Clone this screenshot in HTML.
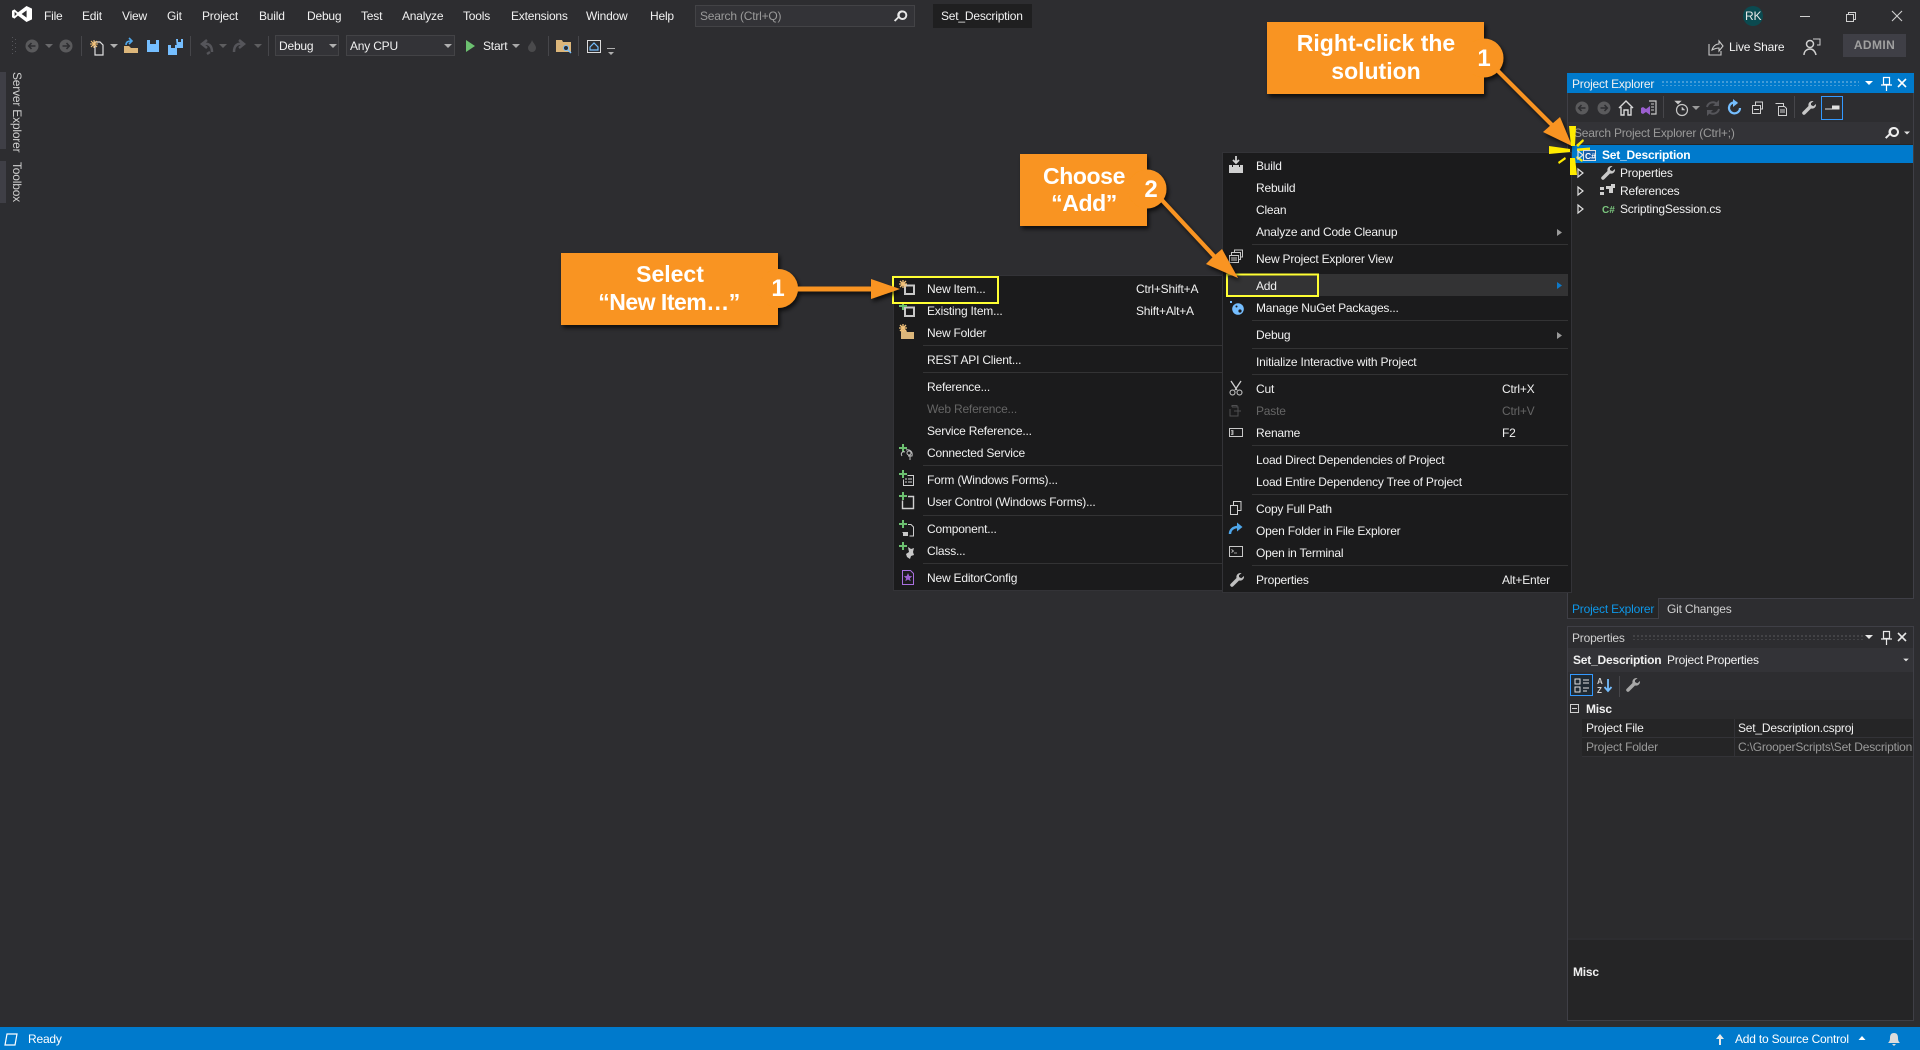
<!DOCTYPE html>
<html><head><meta charset="utf-8"><title>Set_Description</title>
<style>
html,body{margin:0;padding:0;width:1920px;height:1050px;overflow:hidden;background:#2d2d30}
body{position:relative;font:12px/16px "Liberation Sans",sans-serif;color:#f1f1f1}
.t{position:absolute;white-space:nowrap;font-size:12px;line-height:16px;letter-spacing:-.2px}
.b{position:absolute;box-sizing:border-box}
.d{color:#656565}
.g{color:#9a9a9a}
.s{position:absolute;height:1px;background:#333334}
svg{position:absolute;left:0;top:0}
</style></head><body>
<!-- menu bar -->
<div class="t" style="left:44px;top:8px">File</div>
<div class="t" style="left:82px;top:8px">Edit</div>
<div class="t" style="left:122px;top:8px">View</div>
<div class="t" style="left:167px;top:8px">Git</div>
<div class="t" style="left:202px;top:8px">Project</div>
<div class="t" style="left:259px;top:8px">Build</div>
<div class="t" style="left:307px;top:8px">Debug</div>
<div class="t" style="left:361px;top:8px">Test</div>
<div class="t" style="left:402px;top:8px">Analyze</div>
<div class="t" style="left:463px;top:8px">Tools</div>
<div class="t" style="left:511px;top:8px">Extensions</div>
<div class="t" style="left:586px;top:8px">Window</div>
<div class="t" style="left:650px;top:8px">Help</div>
<div class="b" style="left:695px;top:5px;width:220px;height:22px;background:#333337;border:1px solid #434346"></div>
<div class="t g" style="left:700px;top:8px">Search (Ctrl+Q)</div>
<div class="b" style="left:933px;top:4px;width:99px;height:24px;background:#1f1f20"></div>
<div class="t" style="left:941px;top:8px">Set_Description</div>
<div class="t" style="left:1745px;top:8px;z-index:3;color:#e8e8e8">RK</div>
<!-- toolbar combos -->
<div class="b" style="left:275px;top:35px;width:64px;height:21px;background:#333337;border:1px solid #434346"></div>
<div class="t" style="left:279px;top:38px">Debug</div>
<div class="b" style="left:346px;top:35px;width:109px;height:21px;background:#333337;border:1px solid #434346"></div>
<div class="t" style="left:350px;top:38px">Any CPU</div>
<div class="t" style="left:483px;top:38px">Start</div>
<div class="t" style="left:1729px;top:39px">Live Share</div>
<div class="b" style="left:1843px;top:34px;width:63px;height:23px;background:#3f3f46;color:#a0a0a0;font:bold 12px/23px 'Liberation Sans',sans-serif;text-align:center;letter-spacing:.4px">ADMIN</div>
<!-- vertical tabs -->
<div class="b" style="left:0;top:72px;width:6px;height:77px;background:#3f3f46"></div>
<div class="b" style="left:0;top:161px;width:6px;height:42px;background:#3f3f46"></div>
<div class="t" style="left:9px;top:72px;writing-mode:vertical-rl;color:#d0d0d0">Server Explorer</div>
<div class="t" style="left:9px;top:162px;writing-mode:vertical-rl;color:#d0d0d0">Toolbox</div>
<!-- Project Explorer panel -->
<div class="b" style="left:1567px;top:73px;width:347px;height:526px;background:#252526;border:1px solid #3f3f46"></div>
<div class="b" style="left:1567px;top:73px;width:347px;height:20px;background:#007acc"></div>
<div class="t" style="left:1572px;top:76px">Project Explorer</div>
<div class="b" style="left:1661px;top:80px;width:198px;height:6px;background-image:radial-gradient(#59a8dc 0.8px,transparent 1px);background-size:4px 4px"></div>
<div class="b" style="left:1568px;top:93px;width:345px;height:29px;background:#2d2d30"></div>
<div class="b" style="left:1568px;top:122px;width:345px;height:22px;background:#333337"></div>
<div class="b" style="left:1900px;top:122px;width:13px;height:22px;background:#2d2d30"></div>
<div class="t g" style="left:1574px;top:125px">Search Project Explorer (Ctrl+;)</div>
<div class="b" style="left:1572px;top:145px;width:341px;height:18px;background:#007acc"></div>
<div class="t" style="left:1602px;top:147px;font-weight:bold;color:#fff">Set_Description</div>
<div class="t" style="left:1620px;top:165px">Properties</div>
<div class="t" style="left:1620px;top:183px">References</div>
<div class="t" style="left:1620px;top:201px">ScriptingSession.cs</div>
<!-- panel tabs -->
<div class="b" style="left:1567px;top:598px;width:92px;height:21px;background:#252526;border:1px solid #3f3f46;border-top:0"></div>
<div class="t" style="left:1572px;top:601px;color:#0e97e8">Project Explorer</div>
<div class="t" style="left:1667px;top:601px;color:#d0d0d0">Git Changes</div>
<!-- Properties panel -->
<div class="b" style="left:1567px;top:626px;width:347px;height:395px;background:#252526;border:1px solid #3f3f46"></div>
<div class="b" style="left:1568px;top:627px;width:345px;height:21px;background:#2d2d30"></div>
<div class="t" style="left:1572px;top:630px;color:#d0d0d0">Properties</div>
<div class="b" style="left:1632px;top:634px;width:232px;height:6px;background-image:radial-gradient(#4a4a4e 0.8px,transparent 1px);background-size:4px 4px"></div>
<div class="b" style="left:1568px;top:648px;width:345px;height:24px;background:#333337"></div>
<div class="t" style="left:1573px;top:652px;font-weight:bold">Set_Description</div>
<div class="t" style="left:1667px;top:652px">Project Properties</div>
<div class="b" style="left:1568px;top:672px;width:345px;height:28px;background:#2d2d30"></div>
<div class="b" style="left:1570px;top:674px;width:23px;height:22px;background:#1f2a33;border:1px solid #3399ff"></div>
<div class="b" style="left:1568px;top:700px;width:345px;height:238px;background:#2b2b2d"></div>
<div class="t" style="left:1586px;top:701px;font-weight:bold">Misc</div>
<div class="b" style="left:1582px;top:719px;width:331px;height:19px;background:#252526;border-bottom:1px solid #333337"></div>
<div class="b" style="left:1582px;top:738px;width:331px;height:19px;background:#252526;border-bottom:1px solid #333337"></div>
<div class="b" style="left:1734px;top:719px;width:1px;height:38px;background:#333337"></div>
<div class="t" style="left:1586px;top:720px">Project File</div>
<div class="t g" style="left:1586px;top:739px">Project Folder</div>
<div class="t" style="left:1738px;top:720px">Set_Description.csproj</div>
<div class="t g" style="left:1738px;top:739px;width:175px;overflow:hidden">C:\GrooperScripts\Set Description</div>
<div class="b" style="left:1568px;top:938px;width:345px;height:2px;background:#2d2d30"></div>
<div class="t" style="left:1573px;top:964px;font-weight:bold">Misc</div>
<!-- left submenu -->
<div class="b" style="left:893px;top:275px;width:340px;height:316px;background:#1b1b1c;border:1px solid #333337"></div>
<div class="s" style="left:923px;top:345px;width:300px"></div>
<div class="s" style="left:923px;top:372px;width:300px"></div>
<div class="s" style="left:923px;top:465px;width:300px"></div>
<div class="s" style="left:923px;top:515px;width:300px"></div>
<div class="s" style="left:923px;top:563px;width:300px"></div>
<div class="t" style="left:927px;top:281px">New Item...</div>
<div class="t" style="left:1136px;top:281px">Ctrl+Shift+A</div>
<div class="t" style="left:927px;top:303px">Existing Item...</div>
<div class="t" style="left:1136px;top:303px">Shift+Alt+A</div>
<div class="t" style="left:927px;top:325px">New Folder</div>
<div class="t" style="left:927px;top:352px">REST API Client...</div>
<div class="t" style="left:927px;top:379px">Reference...</div>
<div class="t d" style="left:927px;top:401px">Web Reference...</div>
<div class="t" style="left:927px;top:423px">Service Reference...</div>
<div class="t" style="left:927px;top:445px">Connected Service</div>
<div class="t" style="left:927px;top:472px">Form (Windows Forms)...</div>
<div class="t" style="left:927px;top:494px">User Control (Windows Forms)...</div>
<div class="t" style="left:927px;top:521px">Component...</div>
<div class="t" style="left:927px;top:543px">Class...</div>
<div class="t" style="left:927px;top:570px">New EditorConfig</div>
<!-- right context menu -->
<div class="b" style="left:1222px;top:152px;width:350px;height:441px;background:#1b1b1c;border:1px solid #333337"></div>
<div class="b" style="left:1226px;top:274px;width:342px;height:22px;background:#333334"></div>
<div class="s" style="left:1252px;top:244px;width:316px"></div>
<div class="s" style="left:1252px;top:320px;width:316px"></div>
<div class="s" style="left:1252px;top:348px;width:316px"></div>
<div class="s" style="left:1252px;top:374px;width:316px"></div>
<div class="s" style="left:1252px;top:445px;width:316px"></div>
<div class="s" style="left:1252px;top:494px;width:316px"></div>
<div class="s" style="left:1252px;top:565px;width:316px"></div>
<div class="t" style="left:1256px;top:158px">Build</div>
<div class="t" style="left:1256px;top:180px">Rebuild</div>
<div class="t" style="left:1256px;top:202px">Clean</div>
<div class="t" style="left:1256px;top:224px">Analyze and Code Cleanup</div>
<div class="t" style="left:1256px;top:251px">New Project Explorer View</div>
<div class="t" style="left:1256px;top:278px">Add</div>
<div class="t" style="left:1256px;top:300px">Manage NuGet Packages...</div>
<div class="t" style="left:1256px;top:327px">Debug</div>
<div class="t" style="left:1256px;top:354px">Initialize Interactive with Project</div>
<div class="t" style="left:1256px;top:381px">Cut</div>
<div class="t" style="left:1502px;top:381px">Ctrl+X</div>
<div class="t d" style="left:1256px;top:403px">Paste</div>
<div class="t d" style="left:1502px;top:403px">Ctrl+V</div>
<div class="t" style="left:1256px;top:425px">Rename</div>
<div class="t" style="left:1502px;top:425px">F2</div>
<div class="t" style="left:1256px;top:452px">Load Direct Dependencies of Project</div>
<div class="t" style="left:1256px;top:474px">Load Entire Dependency Tree of Project</div>
<div class="t" style="left:1256px;top:501px">Copy Full Path</div>
<div class="t" style="left:1256px;top:523px">Open Folder in File Explorer</div>
<div class="t" style="left:1256px;top:545px">Open in Terminal</div>
<div class="t" style="left:1256px;top:572px">Properties</div>
<div class="t" style="left:1502px;top:572px">Alt+Enter</div>
<!-- status bar -->
<div class="b" style="left:0;top:1027px;width:1920px;height:23px;background:#007acc"></div>
<div class="t" style="left:28px;top:1031px;color:#fff">Ready</div>
<div class="t" style="left:1735px;top:1031px;color:#fff">Add to Source Control</div>

<svg width="1920" height="1050" viewBox="0 0 1920 1050" style="z-index:2">
<defs>
<filter id="sh" x="-20%" y="-20%" width="150%" height="150%"><feDropShadow dx="2" dy="3" stdDeviation="2" flood-color="#000" flood-opacity=".7"/></filter>
<path id="wr" d="M11.5 1a4 4 0 0 0-4 5L1.500 12a1.800 1.800 0 0 0 2.500 2.500l6-6a4 4 0 0 0 5-4.500l-2.700 2.200L10 5V3.200L12.600 1z"/>
<path id="tri" d="M-4-2H4L0 2z"/>
<path id="mag" d="M10 1a5 5 0 1 1-3.900 8.100L2.400 12.800 1 11.400l3.800-3.700A5 5 0 0 1 10 1zm0 2a3 3 0 1 0 0 6 3 3 0 0 0 0-6z"/>
<g id="pl"><path d="M-1-4H1V-1H4V1H1V4H-1V1H-4V-1H-1z" fill="#6cc070"/></g>
<g id="star"><path d="M0-4V4M-4 0H4M-3-3L3 3M-3 3L3-3" stroke="#f3c27a" stroke-width="1.300" fill="none"/></g>
<g id="bk"><circle r="6.500" fill="#5a5a5c"/><path d="M3.500 0H-3M-.5-3L-3.300 0-.5 3" stroke="#2d2d30" stroke-width="1.600" fill="none"/></g>
<g id="fw"><circle r="6.500" fill="#5a5a5c"/><path d="M-3.500 0H3M.5-3L3.300 0 .5 3" stroke="#2d2d30" stroke-width="1.600" fill="none"/></g>
</defs>
<!-- logo -->
<path fill-rule="evenodd" fill="#fff" d="M26.500 6L32 8.600V19.400L26.500 22 18 15.600 14.500 18.600 12 17.300V10.700L14.500 9.400 18 12.400zM26.600 10.400L21.600 14 26.600 17.600zM14.600 11.800V16.200L16.900 14z"/>
<!-- search icons -->
<use href="#mag" transform="translate(893,9.500) scale(.95)" fill="#e8e8e8"/>
<!-- toolbar -->
<g fill="#55555a"><rect x="12" y="37" width="1" height="1"/><rect x="15" y="39" width="1" height="1"/><rect x="12" y="41" width="1" height="1"/><rect x="15" y="43" width="1" height="1"/><rect x="12" y="45" width="1" height="1"/><rect x="15" y="47" width="1" height="1"/><rect x="12" y="49" width="1" height="1"/><rect x="15" y="51" width="1" height="1"/><rect x="12" y="53" width="1" height="1"/></g>
<use href="#bk" transform="translate(32,46)"/>
<use href="#tri" transform="translate(49,46)" fill="#6a6a6c"/>
<use href="#fw" transform="translate(66,46)"/>
<g fill="#46464a"><rect x="81" y="36" width="1" height="20"/><rect x="190" y="36" width="1" height="20"/><rect x="268" y="36" width="1" height="20"/><rect x="548" y="36" width="1" height="20"/><rect x="578" y="36" width="1" height="20"/></g>
<path d="M94 42h6l3 3v10h-8V46" fill="none" stroke="#e0e0e0" stroke-width="1.200"/><path d="M90 44h8M94 40v8M91 41l6 6M91 47l6-6" stroke="#f3c27a" stroke-width="1.100"/>
<use href="#tri" transform="translate(114,46)" fill="#b0b0b0"/>
<path d="M124 46h5l2 2h7v5h-14z" fill="#dcb67a"/><path d="M126 45c0-3 2-4 5-4M129 38l3 3-3 3" fill="none" stroke="#4ea6ea" stroke-width="1.600"/>
<path d="M147 40h3v4h6v-4h3v12h-12z" fill="#75beff"/>
<path d="M168 45h3v3h4v-3h2v10h-9zM176 39h2v3h3v-3h2v9h-6z" fill="#75beff"/>
<path d="M212 52c0-7-4-9-8-8M207 40l-5 4 5 4M207 54l3-2" fill="none" stroke="#55555a" stroke-width="2.500"/>
<use href="#tri" transform="translate(223,46)" fill="#5e5e60"/>
<path d="M234 52c0-7 4-9 8-8M239 40l5 4-5 4" fill="none" stroke="#55555a" stroke-width="2.500"/>
<use href="#tri" transform="translate(258,46)" fill="#5e5e60"/>
<use href="#tri" transform="translate(333,46)" fill="#b0b0b0"/>
<use href="#tri" transform="translate(448,46)" fill="#b0b0b0"/>
<path d="M466 40L475 46 466 52z" fill="#6cc070"/>
<use href="#tri" transform="translate(516,46)" fill="#a8a8a8"/>
<path d="M532 40c1 3 4 5 4 8a4 4 0 0 1-8 0c0-3 3-4 4-8z" fill="#4a4a4c"/>
<path d="M556 40h6l1 2h8v10h-15z" fill="#dcb67a"/><circle cx="566" cy="48" r="2.500" fill="#2d2d30" stroke="#75beff"/><path d="M568 50l3 3" stroke="#75beff" stroke-width="1.400"/>
<rect x="587.500" y="40.500" width="13" height="12" fill="none" stroke="#dcdcdc"/><path d="M590 47l4-4 4 4v3h-8z" fill="none" stroke="#75beff" stroke-width="1.200"/>
<path d="M607 49h8v1h-8zM608 53h6l-3 3z" fill="#b0b0b0" transform="translate(0,-1)"/>
<!-- window -->
<circle cx="1753" cy="16" r="10" fill="#0b4a50"/>
<rect x="1800" y="16" width="10" height="1" fill="#d0d0d0"/>
<path d="M1846.500 14.500h7v7h-7zM1848.500 14.500v-2h7v7h-2" fill="none" stroke="#d0d0d0"/>
<path d="M1892 11l10 10M1902 11l-10 10" stroke="#d0d0d0" stroke-width="1.100"/>
<path d="M1709 44v11h12v-4M1712 50c1-4 4-6 7-6v-3l4 5-4 5v-3c-3 0-5 1-7 2z" fill="none" stroke="#c8c8c8" stroke-width="1.100"/>
<circle cx="1810" cy="44" r="3.500" fill="none" stroke="#d0d0d0" stroke-width="1.500"/><path d="M1804 55c0-4 3-6 6-6s5 2 6 6" fill="none" stroke="#d0d0d0" stroke-width="1.500"/><path d="M1813 39h7v6h-3" fill="none" stroke="#d0d0d0"/>
<!-- PE title icons -->
<g><use href="#tri" transform="translate(1869,83)" fill="#fff"/>
<path d="M1883.500 77.500h6v7h-6zM1886.500 85v6M1881 85h11" fill="none" stroke="#fff" stroke-width="1.200"/>
<path d="M1898 79l8 8M1906 79l-8 8" stroke="#fff" stroke-width="1.600"/></g>
<!-- PE toolbar -->
<use href="#bk" transform="translate(1582,108)"/><use href="#fw" transform="translate(1604,108)"/>
<path d="M1619 108l7-7 7 7M1621 107v8h3v-5h4v5h3v-8" fill="none" stroke="#d8d8d8" stroke-width="1.400"/>
<path d="M1649 101h7v13h-5" fill="none" stroke="#c8c8c8" stroke-width="1.200"/><path d="M1651 104h3M1651 107h3M1651 110h3" stroke="#c8c8c8"/><path d="M1641 108l2-1 3 2 4-3v9l-4-3-3 2-2-1z" fill="#9b5fd0"/>
<rect x="1663" y="96" width="1" height="22" fill="#46464a"/>
<circle cx="1682" cy="110" r="5.500" fill="none" stroke="#c8c8c8" stroke-width="1.200"/><path d="M1682 107v3h3M1675 101h6l-3 3z" stroke="#c8c8c8" fill="#c8c8c8" stroke-width=".6"/>
<use href="#tri" transform="translate(1696,108)" fill="#9a9a9a"/>
<path d="M1707 107a6 6 0 0 1 10-3M1719 109a6 6 0 0 1-10 3" fill="none" stroke="#55555a" stroke-width="2"/><path d="M1719 100v6h-6zM1707 116v-6h6z" fill="#55555a"/>
<path d="M1740 108a5.500 5.500 0 1 1-3-5" fill="none" stroke="#75beff" stroke-width="2.200"/><path d="M1733 99v8l5-4z" fill="#75beff"/>
<path d="M1752.500 105.500h8v8h-8zM1755.500 105v-3h7v7h-2M1754 109.500h5" fill="none" stroke="#d0d0d0"/>
<path d="M1775.500 103.500h8v3M1778.500 106.500h6l2 2v7h-8zM1780 110h5M1780 112h5" fill="none" stroke="#d0d0d0"/>
<rect x="1794" y="96" width="1" height="22" fill="#46464a"/>
<use href="#wr" transform="translate(1801,100)" fill="#c8c8c8"/>
<rect x="1821.500" y="96.500" width="21" height="23" fill="none" stroke="#3399ff"/>
<path d="M1825 109h14v-3h-7" fill="none" stroke="#e0e0e0"/><rect x="1832" y="106" width="7" height="3" fill="#e0e0e0"/>
<!-- PE search -->
<use href="#mag" transform="translate(1884,126)" fill="#eee"/>
<use href="#tri" transform="translate(1907,133) scale(.75)" fill="#e0e0e0"/>
<!-- tree -->
<path d="M1578 170l5 4-5 4z M1578 188l5 4-5 4zM1578 206l5 4-5 4z" fill="none" stroke="#e0e0e0" stroke-width="1.200" transform="translate(0,-1)"/>
<use href="#wr" transform="translate(1600,165)" fill="#c8c8c8"/>
<path d="M1600 187h4v3h-4zM1606 186h5v-2h4v4h-2v5h-4v-4h-3zM1600 192h4v3h-4z" fill="#d0d0d0"/>
<text x="1602" y="213" font-family="Liberation Sans" font-weight="bold" font-size="10" fill="#7bc67e">C#</text>
<!-- properties icons -->
<use href="#tri" transform="translate(1869,637)" fill="#e8e8e8"/>
<path d="M1883.500 631.500h6v7h-6zM1886.500 639v6M1881 639h11" fill="none" stroke="#e8e8e8" stroke-width="1.200"/>
<path d="M1898 633l8 8M1906 633l-8 8" stroke="#e8e8e8" stroke-width="1.600"/>
<use href="#tri" transform="translate(1906,660) scale(.7)" fill="#e0e0e0"/>
<path d="M1575 679h5v5h-5zM1575 687h5v5h-5zM1583 680h6M1583 683h6M1583 688h6M1583 691h4" fill="none" stroke="#e0e0e0"/>
<text x="1597" y="684" font-family="Liberation Sans" font-weight="bold" font-size="8" fill="#d0d0d0">A</text>
<text x="1597" y="693" font-family="Liberation Sans" font-weight="bold" font-size="8" fill="#d0d0d0">Z</text>
<path d="M1608 679v11M1604.500 687l3.500 4 3.500-4" fill="none" stroke="#75beff" stroke-width="1.800"/>
<rect x="1619" y="676" width="1" height="21" fill="#46464a"/>
<use href="#wr" transform="translate(1625,677)" fill="#a8a8a8"/>
<rect x="1570.500" y="704.500" width="8" height="8" fill="none" stroke="#d0d0d0"/><path d="M1572 708.500h5" stroke="#d0d0d0"/>
<!-- right menu icons -->
<path d="M1229 165l3 0 0 2h1v-2h6v2h1v-2h3v8h-14z" fill="#d0d0d0"/><path d="M1236 156v6M1233 160l3 3 3-3" stroke="#d0d0d0" stroke-width="1.800" fill="none"/>
<path d="M1229.500 255.500h9v7h-9zM1231 258h6M1231 260h6M1231.500 255v-2.500h9v7h-2M1234.500 252.500v-2.500h8v7h-2" fill="none" stroke="#c8c8c8"/>
<circle cx="1238" cy="309" r="5.800" fill="#75beff"/><circle cx="1240" cy="311" r="1.600" fill="#1b1b1c"/><circle cx="1236.500" cy="306.500" r="1" fill="#1b1b1c"/><rect x="1230" y="301" width="2" height="2" fill="#75beff"/>
<path d="M1231 381l6 9M1241 381l-6 9" stroke="#d0d0d0" stroke-width="1.300"/><circle cx="1232.500" cy="392.500" r="2.500" fill="none" stroke="#d0d0d0"/><circle cx="1239.500" cy="392.500" r="2.500" fill="none" stroke="#d0d0d0"/>
<path d="M1232 407h6v9h-8v-7M1232 407v-1.500h5v2M1234 411h7" fill="none" stroke="#4f4f51"/>
<rect x="1229.500" y="428.500" width="13" height="8" fill="none" stroke="#c8c8c8"/><path d="M1231 430.500h2v4h-2M1232 430.500v4" stroke="#c8c8c8" stroke-width=".8" fill="none"/>
<path d="M1230.500 505.500h7v9h-7zM1233.500 505v-3.500h7.500v9h-3" fill="none" stroke="#d0d0d0"/>
<path d="M1230 534c0-4 3-7 8-7" fill="none" stroke="#4ea6ea" stroke-width="2.500"/><path d="M1237 522.500l5.500 4.500-5.500 4.500z" fill="#4ea6ea"/>
<rect x="1229.500" y="546.500" width="13" height="10" fill="none" stroke="#c8c8c8"/><path d="M1231.500 549.500l2 1.500-2 1.500M1234 553h3" fill="none" stroke="#c8c8c8" stroke-width=".8"/>
<use href="#wr" transform="translate(1229,572)" fill="#c0c0c0"/>
<path d="M1557 229l5 3.500-5 3.500zM1557 332l5 3.500-5 3.500z" fill="#9a9a9a"/><path d="M1557 282l5 3.500-5 3.500z" fill="#0e79c8"/>
<!-- left menu icons -->
<rect x="905" y="285.500" width="9" height="8.500" fill="none" stroke="#c8c8c8" stroke-width="2"/><use href="#star" transform="translate(903,284)"/>
<rect x="905" y="307.500" width="9" height="8.500" fill="none" stroke="#c8c8c8" stroke-width="2"/><use href="#pl" transform="translate(903,306)"/>
<path d="M901 330h5l1 2h7v7h-13z" fill="#dcb67a"/><use href="#star" transform="translate(903,328)"/>
<use href="#pl" transform="translate(903,448)"/><path d="M902 456c-2-3 1-5 3-4M906 450c4-1 7 2 6 6h-4M910 455v5" fill="none" stroke="#c0c0c0"/><circle cx="909" cy="453" r="2" fill="none" stroke="#c0c0c0"/>
<use href="#pl" transform="translate(903,474)"/><path d="M907.500 475.500h6v10h-10v-6M905 479h2M908 479h4M905 482h2M908 482h4" fill="none" stroke="#d0d0d0"/>
<use href="#pl" transform="translate(903,496)"/><path d="M908 496.500h5.500v12h-11v-8" fill="none" stroke="#d0d0d0" stroke-width="1.400"/>
<use href="#pl" transform="translate(903,524)"/><path d="M908 524.500h3l2.500 2.500v9h-4M903 532v1" fill="none" stroke="#d0d0d0"/><rect x="903" y="532" width="5" height="4" fill="#c8c8c8"/>
<use href="#pl" transform="translate(903,546)"/><path d="M908 547l3 2 3-1-1 4 1 3-3 1-1 3-3-2-1-3 3-2z" fill="#c8c8c8"/>
<path d="M902.500 570.500h8l3 3v11h-11z" fill="none" stroke="#a970e0"/><path d="M908 573l1.300 3 3 .2-2.400 2 .8 3-2.700-1.700-2.700 1.700.8-3-2.400-2 3-.2z" fill="#9b5fd0"/>
<!-- status icons -->
<path d="M7 1034h10l-2 11H5z" fill="none" stroke="#fff" stroke-width="1.200"/>
<path d="M1720 1034l-4 5h3v6h2v-6h3z" fill="#e8e8e8"/>
<path d="M1862 1036l3.500 4h-7z" fill="#fff"/>
<path d="M1894 1033c3 0 4 2 4 5 0 3 1 4 2 5h-12c1-1 2-2 2-5 0-3 1-5 4-5zM1892 1044h4l-2 2z" fill="#dcdcdc"/>
<!-- yellow boxes -->
<rect x="893" y="277" width="105" height="26" fill="none" stroke="#ffff33" stroke-width="2"/>
<rect x="1227" y="274.500" width="91" height="21.500" fill="none" stroke="#ffff33" stroke-width="2"/>
<!-- callouts -->
<g filter="url(#sh)" fill="#f99420">
<rect x="561" y="253" width="217" height="72"/><circle cx="778.500" cy="288.500" r="19.500"/>
<path d="M797 286.500H871V279L900 289 871 299V291.500H797z"/>
<rect x="1020" y="154" width="127" height="72"/><circle cx="1147" cy="189" r="19.500"/>
<path d="M1158.500 199.400L1161.500 196.600 1215.500 254.600 1222 249 1238 278 1206 264 1212.500 257.400z"/>
<rect x="1267" y="22" width="217" height="72"/><circle cx="1484" cy="58" r="19.500"/>
<path d="M1495.500 71.400L1498.500 68.600 1553 123.100 1560 117 1572 146 1543 132 1550 125.900z"/>
</g>
<!-- burst -->
<g fill="#ffeb00">
<path d="M1569 126h7l-1 20h-4z"/><path d="M1570 158h5l2 17h-7z"/>
<path d="M1549 146l21 3v3l-21 2z"/><path d="M1577 148.500l13-1v3l-13 .5z"/>
<path d="M1576 145l7-6 1 2-6 6zM1565 157l-7 5 1 2 7-5zM1577 156l6 4-1 2-6-4z"/>
</g>
<!-- solution icon / expander above burst -->
<path d="M1578 151l5 4-5 4z" fill="none" stroke="#e0e0e0" stroke-width="1.200"/>
<rect x="1583.500" y="150.500" width="12" height="10" fill="#1a5fa8" stroke="#dcdcdc"/>
<text x="1585" y="159" font-family="Liberation Sans" font-weight="bold" font-size="8.500" fill="#fff">C#</text>
<g font-family="Liberation Sans" font-weight="bold" font-size="23" fill="#fff" text-anchor="middle">
<text x="670" y="282">Select</text>
<text x="669" y="310" letter-spacing="-.5">“New Item…”</text>
<text x="778" y="296" font-size="24">1</text>
<text x="1084" y="184" letter-spacing="-.4">Choose</text>
<text x="1084" y="211" letter-spacing="-.4">“Add”</text>
<text x="1151" y="197" font-size="24">2</text>
<text x="1376" y="51">Right-click the</text>
<text x="1376" y="79">solution</text>
<text x="1484" y="66" font-size="24">1</text>
</g>
</svg>
</body></html>
